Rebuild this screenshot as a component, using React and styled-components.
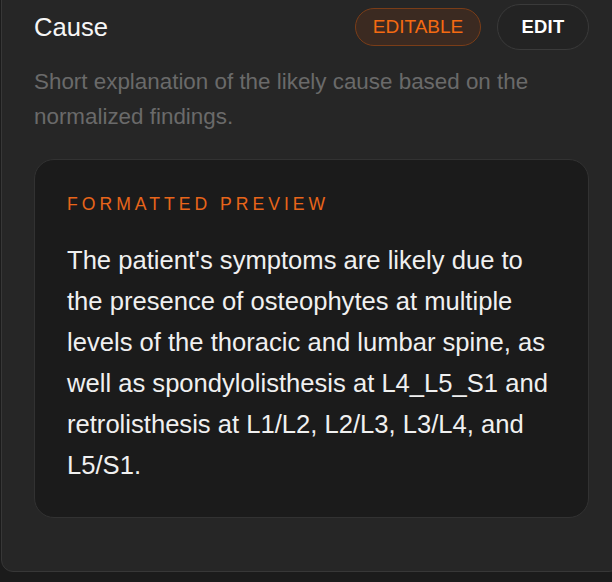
import styled, { createGlobalStyle } from 'styled-components';

const GlobalStyle = createGlobalStyle`
    html, body {
        margin: 0;
        padding: 0;
        background: #1b1b1b;
        font-family: "Liberation Sans", Arial, sans-serif;
        overflow: hidden;
    }
`;

const cause = "The patient's symptoms are likely due to the presence of osteophytes at multiple levels of the thoracic and lumbar spine, as well as spondylolisthesis at L4_L5_S1 and retrolisthesis at L1/L2, L2/L3, L3/L4, and L5/S1.";

export default function App() {
    return (
        <>
            <GlobalStyle />
            <Panel>
                <Header>
                    <Title>Cause</Title>
                    <Actions>
                        <Badge>EDITABLE</Badge>
                        <EditBtn>EDIT</EditBtn>
                    </Actions>
                </Header>
                <Description>
                    Short explanation of the likely cause based on the normalized findings.
                </Description>
                <Preview>
                    <PreviewLabel>Formatted preview</PreviewLabel>
                    <PreviewText>{cause}</PreviewText>
                </Preview>
            </Panel>
        </>
    );
}

const Panel = styled.section`
    box-sizing: border-box;
    width: 620px;
    margin: -29px 0 0 1px;
    padding: 32px 31px 53px 32px;
    background: #262626;
    border: 1px solid #373737;
    border-radius: 12px;
`;

const Header = styled.div`
    display: flex;
    align-items: center;
    justify-content: space-between;
    height: 46px;
`;

const Title = styled.h2`
    margin: 0;
    font-size: 25.6px;
    font-weight: 400;
    color: #f6f6f6;
`;

const Actions = styled.div`
    display: flex;
    align-items: center;
    gap: 16px;
`;

const Badge = styled.span`
    box-sizing: border-box;
    display: flex;
    align-items: center;
    justify-content: center;
    height: 38px;
    width: 126px;
    border-radius: 19px;
    background: #3b2a21;
    border: 1px solid #7a3d18;
    color: #f46a12;
    font-size: 19px;
`;

const EditBtn = styled.button`
    box-sizing: border-box;
    height: 46px;
    width: 92px;
    border-radius: 23px;
    background: #232323;
    border: 1px solid #3a3a3a;
    color: #ffffff;
    font-family: inherit;
    font-size: 18.4px;
    font-weight: 700;
    letter-spacing: 0.3px;
    cursor: pointer;
`;

const Description = styled.p`
    margin: 14px 0 0;
    font-size: 22.4px;
    line-height: 35px;
    color: #6a6a6a;
`;

const Preview = styled.div`
    margin-top: 25px;
    padding: 33px 32px 31px;
    background: #1b1b1b;
    border: 1px solid #323232;
    border-radius: 20px;
`;

const PreviewLabel = styled.div`
    font-size: 17.6px;
    line-height: 22px;
    letter-spacing: 4px;
    text-transform: uppercase;
    color: #e8651a;
`;

const PreviewText = styled.p`
    margin: 25px 0 0;
    font-size: 25.6px;
    line-height: 41px;
    color: #f0f0f0;
`;
